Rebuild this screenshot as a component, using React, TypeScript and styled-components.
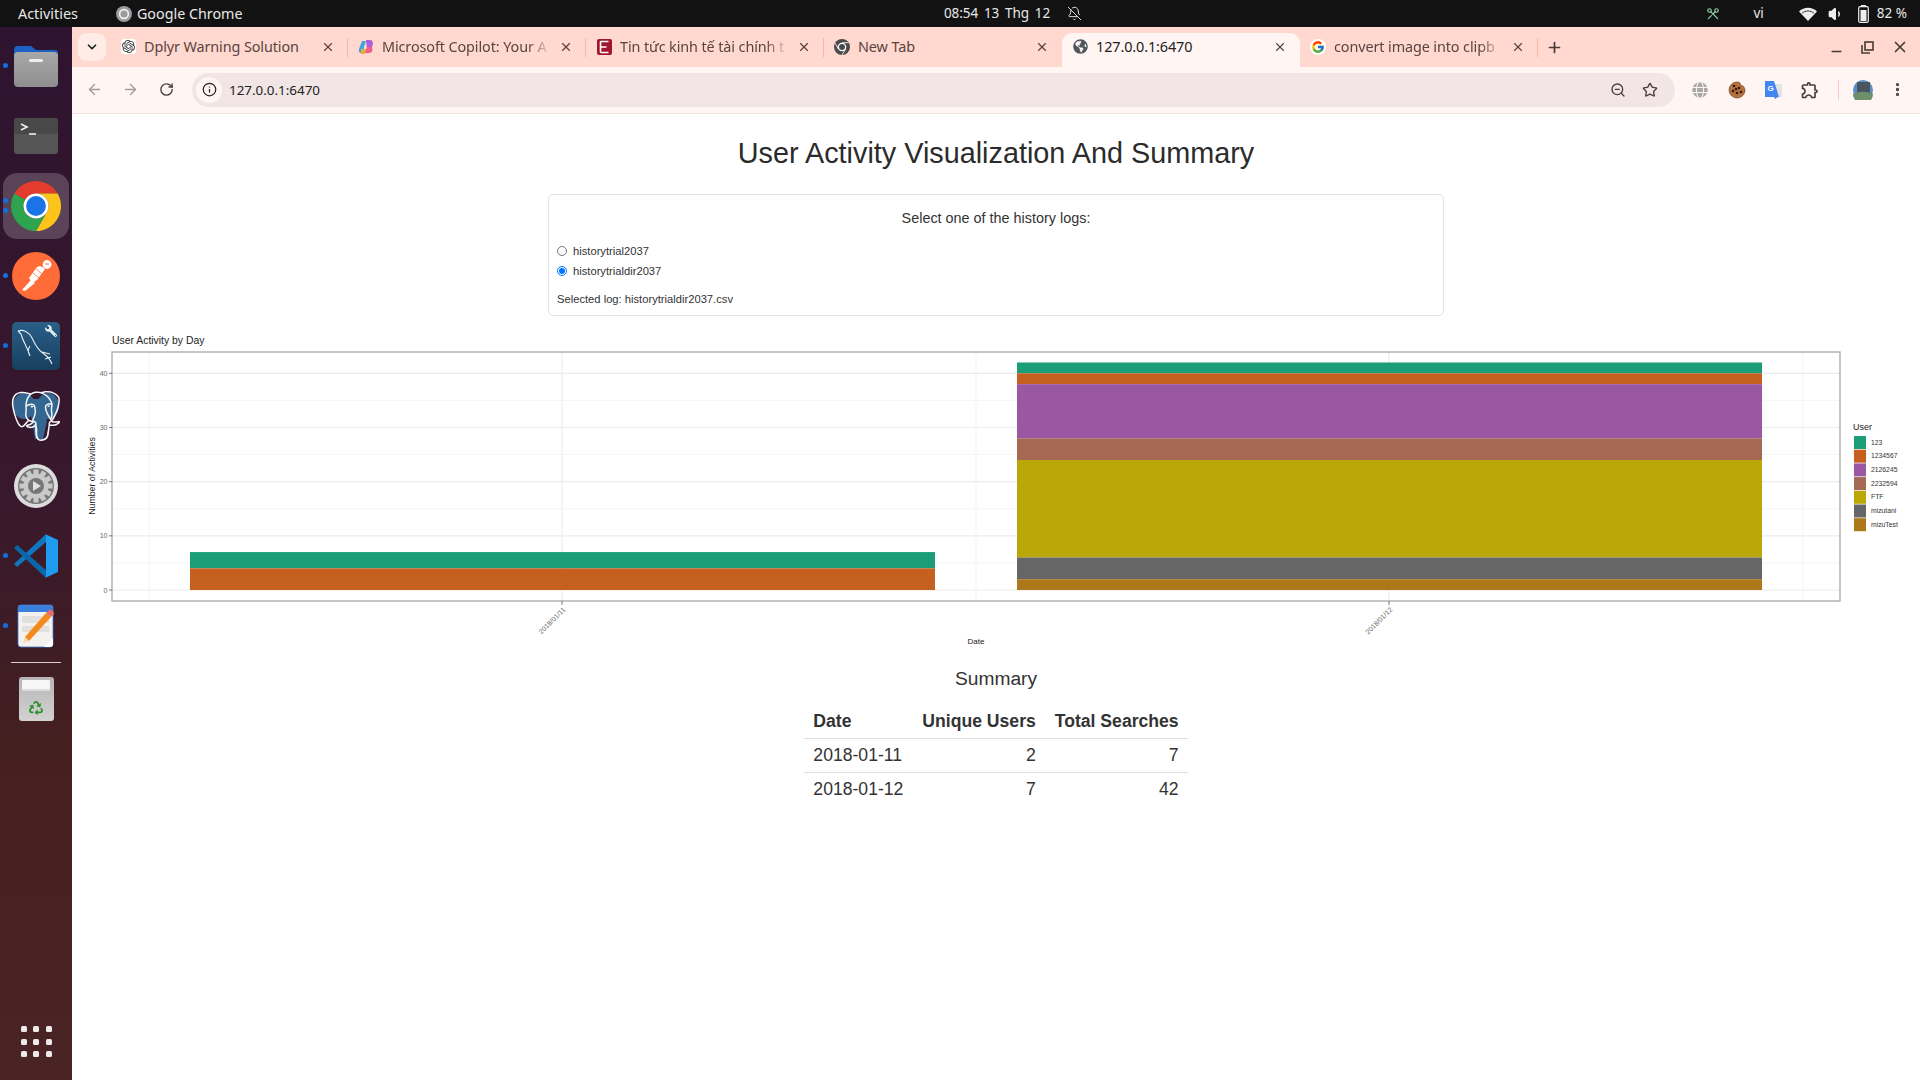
import React from 'react';
import styled, { createGlobalStyle } from 'styled-components';
import { ArrowLeft, ArrowRight, RotateCw, Info, ZoomOut, Star, BellOff, Plus, X, Minus, ChevronDown, EllipsisVertical, Volume1, Scissors } from 'lucide-react';
import { FcGoogle } from 'react-icons/fc';
import { SiOpenai, SiPostgresql } from 'react-icons/si';
import { FaGlobe, FaGlobeAmericas, FaRecycle, FaWrench } from 'react-icons/fa';
import { MdOutlineExtension } from 'react-icons/md';

const Global = createGlobalStyle`
  html, body { margin: 0; padding: 0; width: 1920px; height: 1080px; overflow: hidden; background: #fff; }
  * { box-sizing: border-box; }
`;

const Screen = styled.div`
  width: 1920px; height: 1080px; display: grid;
  grid-template-rows: 27px 1fr; grid-template-columns: 72px 1fr;
  font-family: "Liberation Sans", Arial, sans-serif; color: #333;
`;

/* ---------- GNOME top bar ---------- */
const TopBar = styled.header`
  grid-column: 1 / 3; background: #121212; color: #e8e8e8;
  display: grid; grid-template-columns: 944px 1fr auto; align-items: center;
  font-family: "Noto Sans", sans-serif; font-size: 14px; line-height: 27px;
`;
const TopLeft = styled.div`display: flex; align-items: center; padding-left: 18px;`;
const AppName = styled.span`display: flex; align-items: center; gap: 5px; margin-left: 38px; font-size: 14.3px;`;
const Activities = styled.span`font-size: 14.4px;`;
const TopCenter = styled.div`display: flex; align-items: center; gap: 17px; font-size: 13.5px;`;
const Clock = styled.span`word-spacing: 2.5px; letter-spacing: -0.1px;`;
const TopRight = styled.div`display: flex; align-items: center; padding-right: 13px;`;
const Tray = styled.span<{ $ml: number }>`display: flex; align-items: center; margin-left: ${p => p.$ml}px; font-size: 13.5px;`;
const TrayScissors = styled(Scissors)`transform: rotate(90deg);`;

/* ---------- Dock ---------- */
const Dock = styled.aside`
  background: linear-gradient(180deg, #2e1430 0%, #38182c 45%, #45201f 70%, #4a2424 100%);
  display: flex; flex-direction: column; align-items: center; padding-top: 4px;
`;
const Slot = styled.div`position: relative; width: 72px; height: 70px; flex: none; display: flex; align-items: center; justify-content: center;`;
const Highlight = styled.div`
  width: 66px; height: 66px; border-radius: 14px; background: rgba(255,255,255,.2);
  display: flex; align-items: center; justify-content: center;
`;
const Pip = styled.span<{ $off?: number }>`
  position: absolute; left: 3px; top: calc(50% - 3px + ${p => p.$off ?? 0}px); width: 5px; height: 5px; border-radius: 50%; background: #0f6fe0;
`;
const DockRule = styled.hr`width: 50px; height: 1px; flex: none; border: 0; background: #d8d0d4; margin: 1px 0 0;`;
const TrashSlot = styled(Slot)`height: 72px;`;
const AppGrid = styled.div`
  margin-top: auto; margin-bottom: 23px; display: grid; grid-template-columns: repeat(3, 6px); gap: 6.5px;
  & > i { width: 6px; height: 6px; border-radius: 1.5px; background: #efeaea; }
`;
const IconStack = styled.div<{ $s: number }>`position: relative; width: ${p => p.$s}px; height: ${p => p.$s}px;`;
const WorkbenchBase = styled.svg`display: block;`;
const WrenchBadge = styled(FaWrench)`position: absolute; right: 3px; top: 3px; transform: scaleX(-1);`;
const ElephantBody = styled.svg`position: absolute; inset: 0;`;
const ElephantLines = styled(SiPostgresql)`position: absolute; inset: 0;`;

/* ---------- Browser ---------- */
const Browser = styled.div`display: flex; flex-direction: column; min-width: 0; background: #fff;`;
const TabStrip = styled.div`height: 40px; background: #ffd8cf; display: flex; align-items: flex-end; padding-left: 6px;`;
const TabMenu = styled.div`
  width: 28px; height: 28px; margin: 0 4px 6px 0; border-radius: 9px; background: #ffece7;
  display: flex; align-items: center; justify-content: center; color: #222;
`;
const Tab = styled.div<{ $active?: boolean; $sep?: boolean }>`
  position: relative; width: 238px; height: 34px; flex: none;
  display: flex; align-items: center; padding: 0 13px 7px 10px; gap: 8px;
  font-family: "Noto Sans", sans-serif; font-size: 14.4px; letter-spacing: -0.1px;
  color: ${p => p.$active ? '#222' : '#5a4440'};
  background: ${p => p.$active ? '#fff5f2' : 'transparent'};
  border-radius: ${p => p.$active ? '10px 10px 0 0' : '0'};
  ${p => p.$sep ? `&::after { content: ''; position: absolute; right: 0; top: 5px; height: 19px; width: 1.5px; background: #f9b5a4; }` : ''}
`;
const TabIcon = styled.span`width: 16px; height: 16px; flex: none; display: flex; align-items: center; justify-content: center;`;
const OpenAiFavicon = styled(SiOpenai)`width: 15px; height: 15px; padding: 1px; border-radius: 3px; background: #fff; color: #333;`;
const GoogleChip = styled.span`display: flex; padding: 1px; border-radius: 50%; background: #fff;`;
const TabTitle = styled.span<{ $fade?: boolean }>`
  flex: 1; white-space: nowrap; min-width: 0;
  ${p => p.$fade ? `mask-image: linear-gradient(90deg, #000 86%, transparent 100%);` : ''}
`;
const TabClose = styled.span`display: flex; color: #5a4440; flex: none;`;
const NewTab = styled.div`width: 32px; height: 28px; margin-bottom: 6px; display: flex; align-items: center; justify-content: center; color: #4a3a36;`;
const WindowButtons = styled.div`margin-left: auto; margin-bottom: 6px; height: 28px; display: flex; align-items: center; gap: 16px; padding-right: 11px; color: #4a3a36;`;
const MinimizeIcon = styled(Minus)`transform: translateY(4px);`;
const Toolbar = styled.div`
  height: 47px; background: #fff5f2; border-bottom: 1px solid #f3dfdb;
  display: flex; align-items: center; padding: 0 0 1px 0;
`;
const NavGroup = styled.div`width: 120px; padding-left: 13px; display: flex; gap: 18px; align-items: center;`;
const NavBtn = styled.span<{ $dim?: boolean }>`display: flex; width: 18px; justify-content: center; color: ${p => p.$dim ? '#a89a97' : '#4a3e3b'};`;
const Omnibox = styled.div`
  width: 1483px; height: 34px; border-radius: 17px; background: #f1e6e5; display: flex; align-items: center; padding: 0 17px 0 4px;
`;
const InfoChip = styled.span`width: 26px; height: 26px; border-radius: 50%; background: #fff5f2; display: flex; align-items: center; justify-content: center; color: #222;`;
const UrlText = styled.span`margin-left: 7px; font-family: "Noto Sans", sans-serif; font-size: 13.4px; color: #222; flex: 1;`;
const OmniActions = styled.div`display: flex; gap: 16px; color: #4a3e3b; align-items: center;`;
const ExtGroup = styled.div`display: flex; align-items: center; margin-left: 6.5px;`;
const Ext = styled.span<{ $w?: number }>`width: ${p => p.$w ?? 36}px; display: flex; justify-content: center; align-items: center; color: #4a3e3b;`;
const ExtRule = styled.span`width: 1px; height: 20px; background: #f5cfc6; margin: 0 9px 0 9px;`;

/* ---------- Page (Shiny app) ---------- */
const Page = styled.main`flex: 1; display: flex; flex-direction: column; align-items: center; min-height: 0;`;
const Title = styled.h1`margin: 23px 0 25px; font-size: 28.8px; line-height: 32px; font-weight: 400; color: #2b2b2b;`;
const Card = styled.section`
  width: 896px; height: 122px; border: 1px solid #e3e3e3; border-radius: 5px; padding: 0 8px;
  display: flex; flex-direction: column; font-size: 11.2px;
`;
const CardHeading = styled.h4`margin: 14px 0 14px; text-align: center; font-size: 14.4px; line-height: 18px; font-weight: 400; color: #333;`;
const RadioRow = styled.label`display: flex; align-items: center; height: 20px; gap: 6px;`;
const Radio = styled.input`width: 10px; height: 10px; margin: 0 0 0 0; flex: none;`;
const Selected = styled.p`margin: 11px 0 0; line-height: 14px;`;
const PlotFrame = styled.div`margin-top: 14px; width: 100%; height: 320px; flex: none;`;
const PlotSvg = styled.svg`display: block; width: 100%; height: 100%; font-family: "Liberation Sans", Arial, sans-serif;`;
const SummaryTitle = styled.h3`margin: 17px 0 13px; font-size: 19.2px; line-height: 24px; font-weight: 400; color: #333;`;
const Table = styled.table`width: 384px; border-collapse: collapse; font-size: 17.6px; color: #333;`;
const Th = styled.th<{ $num?: boolean }>`
  padding: 2px 9.5px 0; height: 34px; font-weight: 700; text-align: ${p => p.$num ? 'right' : 'left'}; white-space: nowrap;
  border-bottom: 1px solid #ddd;
`;
const Td = styled.td<{ $num?: boolean; $last?: boolean }>`
  padding: 0 9.5px; height: 34px; white-space: nowrap; text-align: ${p => p.$num ? 'right' : 'left'};
  ${p => p.$last ? '' : 'border-bottom: 1px solid #ddd;'}
`;

/* ---------- Icons ---------- */
const ChromeLogo = ({ s }: { s: number }) => (
  <svg width={s} height={s} viewBox="0 0 48 48">
    <path d="M3.2 12A24 24 0 0 1 44.78 12H24A12 12 0 0 0 13.6 18Z" fill="#e33b2e" />
    <path d="M44.78 12A24 24 0 0 1 24 48L34.4 30A12 12 0 0 0 24 12Z" fill="#fcc419" />
    <path d="M24 48A24 24 0 0 1 3.2 12L13.6 18A12 12 0 0 0 34.4 30Z" fill="#2ea44f" />
    <circle cx="24" cy="24" r="12" fill="#fff" />
    <circle cx="24" cy="24" r="9.5" fill="#1a73e8" />
  </svg>
);
const MonoChrome = ({ s, c, ring }: { s: number; c: string; ring: string }) => (
  <svg width={s} height={s} viewBox="0 0 48 48">
    <circle cx="24" cy="24" r="24" fill={c} />
    <circle cx="24" cy="24" r="13" fill={ring} />
    <circle cx="24" cy="24" r="9" fill={c} />
    <path d="M24 11h20M13 30L3 12M35 30L24 48" stroke={ring} strokeWidth="2.5" />
  </svg>
);
const AppIndicator = () => (
  <svg width="16" height="16" viewBox="0 0 16 16">
    <circle cx="8" cy="8" r="8" fill="#9c9c9c" />
    <circle cx="8" cy="8" r="4.4" fill="none" stroke="#f0f0f0" strokeWidth="1.6" />
  </svg>
);
const FolderIcon = () => (
  <svg width="46" height="44" viewBox="0 0 46 44">
    <defs><linearGradient id="fg" x1="0" y1="0" x2="0" y2="1"><stop offset="0" stopColor="#a8a8a8" /><stop offset="1" stopColor="#8e8e8e" /></linearGradient></defs>
    <path d="M1 6a4 4 0 0 1 4-4h13l5 4h19a3 3 0 0 1 3 3v8H1Z" fill="#1b62c4" />
    <rect x="1" y="8" width="44" height="35" rx="4" fill="url(#fg)" />
    <rect x="16" y="15" width="14" height="3" rx="1.5" fill="#eee" />
  </svg>
);
const TerminalIcon = () => (
  <svg width="44" height="36" viewBox="0 0 44 36">
    <rect x="0" y="0" width="44" height="36" rx="3" fill="#565656" />
    <rect x="0" y="0" width="44" height="16" rx="3" fill="#484848" />
    <path d="M7 6l6 3-6 3" fill="none" stroke="#eee" strokeWidth="1.6" />
    <path d="M15 16h7" stroke="#eee" strokeWidth="1.6" />
  </svg>
);
const PostmanIcon = () => (
  <svg width="48" height="48" viewBox="0 0 48 48">
    <circle cx="24" cy="24" r="24" fill="#ff6c37" />
    <path d="M10 38l9-10 4 3-10 8Z" fill="#fff" />
    <path d="M17 26l8-11c3-2 6 0 8 2l-8 11-5 3Z" fill="#fff" />
    <circle cx="35" cy="12.5" r="4.4" fill="#fff" />
    <path d="M21 21l6 5M24 17l6 5" stroke="#ff6c37" strokeWidth=".8" />
    <path d="M33 12l4 0" stroke="#ff6c37" strokeWidth="1" />
  </svg>
);
const WorkbenchIcon = () => (
  <IconStack $s={48}>
    <WorkbenchBase width="48" height="48" viewBox="0 0 48 48">
      <defs><linearGradient id="wb" x1="0" y1="0" x2="0" y2="1"><stop offset="0" stopColor="#2a5f88" /><stop offset="1" stopColor="#173f5f" /></linearGradient></defs>
      <rect width="48" height="48" rx="5" fill="url(#wb)" />
      <path d="M6 9c5-2 11 1 14 7 3 6 5 12 12 16 3 2 6 5 8 10M6 9l3 3c2 8 6 12 9 22M18 24c-2 3-2 6-1 8M30 30l8 2M33 37l6-2" fill="none" stroke="#e6eef5" strokeWidth="1.1" />
    </WorkbenchBase>
    <WrenchBadge size={12} color="#e6eef5" />
  </IconStack>
);
const PostgresIcon = () => (
  <IconStack $s={50}>
    <ElephantBody width="50" height="50" viewBox="0 0 50 50">
      <ellipse cx="13" cy="15" rx="11" ry="13" fill="#336791" />
      <ellipse cx="37" cy="15" rx="11" ry="13" fill="#336791" />
      <path d="M17 8h16l3 22-4 18h-8l-3-18Z" fill="#336791" />
    </ElephantBody>
    <ElephantLines size={50} color="#f4f6f8" />
  </IconStack>
);
const SettingsIcon = () => {
  const teeth = Array.from({ length: 12 }, (_, i) => i * 30);
  return (
    <svg width="44" height="44" viewBox="0 0 44 44">
      <circle cx="22" cy="22" r="22" fill="#dcdcdc" />
      <circle cx="22" cy="22" r="18" fill="#777" />
      {teeth.map(a => <rect key={a} x="19.5" y="5.5" width="5" height="6" fill="#c9c9c9" transform={`rotate(${a} 22 22)`} />)}
      <circle cx="22" cy="22" r="12.5" fill="#c9c9c9" />
      <circle cx="22" cy="22" r="8" fill="#777" />
      <path d="M19 17l8 5-8 5Z" fill="#e2e2e2" />
    </svg>
  );
};
const VSCodeIcon = () => (
  <svg width="44" height="44" viewBox="0 0 44 44">
    <path d="M0 30l3 3 29-25V0Z" fill="#0f77c0" />
    <path d="M0 14l3-3 29 25v8Z" fill="#0b66a8" />
    <path d="M31 0l13 6v32l-13 6 1-1V1Z" fill="#1f9cf0" />
  </svg>
);
const EditorIcon = () => (
  <svg width="38" height="44" viewBox="0 0 38 44">
    <rect x="1" y="1" width="35" height="42" rx="3" fill="#f4f2ee" stroke="#3f7ad0" strokeWidth="0.8" />
    <path d="M1 4a3 3 0 0 1 3-3h29a3 3 0 0 1 3 3v4H1Z" fill="#3b7fdc" />
    <rect x="5" y="12" width="27" height="7" fill="#e1e0dc" />
    <rect x="5" y="22" width="27" height="6" fill="#e1e0dc" />
    <path d="M8 33l4 4 22-24-5-4Z" fill="#f28a1e" />
    <path d="M8 33l-2 6 6-2Z" fill="#f0d8b0" />
    <path d="M29 9l5 4 3-3c0-3-3-5-5-4Z" fill="#e56a6a" />
    <path d="M27 43l9-9v6a3 3 0 0 1-3 3Z" fill="#fff" />
  </svg>
);
const TrashBody = styled.div`
  position: relative; width: 35px; height: 44px; border-radius: 3px; background: linear-gradient(180deg, #b5b5b5, #d2d2d2);
  display: flex; justify-content: center; padding-top: 3px;
`;
const TrashLid = styled.span`width: 28px; height: 11px; border-radius: 1px; background: #f6f6f6; border-bottom: 2px solid #ddd;`;
const TrashMark = styled.span`position: absolute; left: 10.5px; top: 24px; display: flex;`;
const TrashIcon = () => (
  <TrashBody>
    <TrashLid />
    <TrashMark><FaRecycle size={14} color="#2f8f2f" /></TrashMark>
  </TrashBody>
);
const CopilotIcon = () => (
  <svg width="16" height="16" viewBox="0 0 16 16">
    <path d="M4 2h4L6 8l-1 6H3C1 14 .5 12 1 10Z" fill="#3fa8d8" />
    <path d="M8 1h4c2 0 3 2 3 4l-2 5H9Z" fill="#b25bd6" />
    <path d="M3 10h6l-2 5H3Z" fill="#f2a93b" />
    <path d="M9 8h5c1 3 0 6-3 6H7Z" fill="#ee5f8c" />
  </svg>
);
const ERedIcon = () => (
  <svg width="15" height="16" viewBox="0 0 15 16">
    <rect width="15" height="16" rx="2" fill="#a3142f" />
    <path d="M3.5 2.5h8M3.5 13.5h8M3.5 2.5v11M3.5 8h6" stroke="#fff" strokeWidth="1.6" fill="none" />
  </svg>
);
const CookieIcon = () => (
  <svg width="18" height="18" viewBox="0 0 18 18">
    <path d="M9 1c1 0 2 0 3 1 0 2 2 3 3 3 2 2 2 4 2 5a8 8 0 1 1-8-9Z" fill="#b5713e" stroke="#5a3418" strokeWidth=".6" />
    {[[6, 5], [11, 7], [5, 10], [9, 12], [13, 11], [8, 8]].map(([x, y]) => <circle key={x * y} cx={x} cy={y} r="1.3" fill="#2c1a0e" />)}
  </svg>
);
const TranslateIcon = () => (
  <svg width="18" height="20" viewBox="0 0 18 20">
    <path d="M8 4h10v13H10Z" fill="#e3e3e3" />
    <path d="M1 1h9l5 16H1Z" fill="#4285f4" />
    <text x="3.5" y="11" fontSize="8" fontWeight="700" fill="#fff" fontFamily="Liberation Sans">G</text>
    <path d="M11 19l-1-2h4Z" fill="#4285f4" />
  </svg>
);
const Avatar = () => (
  <svg width="20" height="20" viewBox="0 0 20 20">
    <circle cx="10" cy="10" r="10" fill="#5b8fc9" />
    <rect x="4" y="2" width="13" height="13" fill="#4a5560" />
    <path d="M0 14c5-3 15-3 20 0a10 10 0 0 1-20 0Z" fill="#6f8f6a" />
  </svg>
);
const WifiGlyph = () => (
  <svg width="18" height="14" viewBox="0 0 18 14"><path d="M0 4.5C5-.5 13-.5 18 4.5L9 14Z" fill="#eee" /><path d="M3 6.2c4-3 8-3 12 0" stroke="#121212" strokeWidth=".8" fill="none" /></svg>
);
const BatteryGlyph = () => (
  <svg width="11" height="18" viewBox="0 0 11 18"><rect x="3" y="0" width="5" height="2" fill="#eee" /><rect x=".7" y="1.7" width="9.6" height="15.6" rx="1.6" fill="none" stroke="#eee" strokeWidth="1.2" /><rect x="2.5" y="5" width="6" height="11" fill="#eee" /></svg>
);

/* ---------- Plot data ---------- */
const X0 = 112, X1 = 1840, Y0 = 352, Y1 = 601;
const yOf = (v: number) => 590 - v * 5.417;
const series = [
  { name: '123', c: '#1b9e77' }, { name: '1234567', c: '#c66021' }, { name: '2126245', c: '#9a58a2' },
  { name: '2232594', c: '#a56853' }, { name: 'FTF', c: '#baa708' }, { name: 'mizutani', c: '#666666' }, { name: 'mizuTest', c: '#ac7819' },
];
const rightBar = [[42, 40], [40, 38], [38, 28], [28, 24], [24, 6], [6, 2], [2, 0]];
const leftBar = [[7, 4], [4, 0]];

const Plot = () => (
  <PlotSvg viewBox="72 330 1848 320">
    <text x="112" y="344" fontSize="10.4" fill="#222">User Activity by Day</text>
    {[5, 15, 25, 35].map(v => <line key={v} x1={X0} x2={X1} y1={yOf(v)} y2={yOf(v)} stroke="#f5f5f5" />)}
    {[149, 976, 1803].map(x => <line key={x} x1={x} x2={x} y1={Y0} y2={Y1} stroke="#f5f5f5" />)}
    {[0, 10, 20, 30, 40].map(v => <line key={v} x1={X0} x2={X1} y1={yOf(v)} y2={yOf(v)} stroke="#ececec" strokeWidth="1.2" />)}
    {[562, 1389].map(x => <line key={x} x1={x} x2={x} y1={Y0} y2={Y1} stroke="#ececec" strokeWidth="1.2" />)}
    {leftBar.map(([a, b], i) => <rect key={i} x="190" width="745" y={yOf(a)} height={yOf(b) - yOf(a)} fill={series[i].c} />)}
    {rightBar.map(([a, b], i) => <rect key={i} x="1017" width="745" y={yOf(a)} height={yOf(b) - yOf(a)} fill={series[i].c} />)}
    <rect x={X0} y={Y0} width={X1 - X0} height={Y1 - Y0} fill="none" stroke="#a8a8a8" strokeWidth="1.3" />
    {[0, 10, 20, 30, 40].map(v => (
      <g key={v}>
        <line x1="109" x2={X0} y1={yOf(v)} y2={yOf(v)} stroke="#444" strokeWidth=".7" />
        <text x="107.5" y={yOf(v) + 2.5} fontSize="7" textAnchor="end" fill="#666">{v}</text>
      </g>
    ))}
    <text transform="translate(94.5 476) rotate(-90)" fontSize="8.8" textAnchor="middle" fill="#222">Number of Activities</text>
    {[[562, '2018/01/11'], [1389, '2018/01/12']].map(([x, t]) => (
      <g key={t as string}>
        <line x1={x as number} x2={x as number} y1={Y1} y2="605" stroke="#444" strokeWidth=".7" />
        <text transform={`translate(${(x as number) + 4} 610) rotate(-45)`} fontSize="7" textAnchor="end" fill="#666">{t}</text>
      </g>
    ))}
    <text x="976" y="644" fontSize="8" textAnchor="middle" fill="#222">Date</text>
    <text x="1853" y="430" fontSize="9" fill="#222">User</text>
    {series.map((s, i) => (
      <g key={s.name}>
        <rect x="1854" y={436 + i * 13.7} width="12" height="13" fill={s.c} />
        <text x="1871" y={444.5 + i * 13.7} fontSize="6.8" fill="#333">{s.name}</text>
      </g>
    ))}
  </PlotSvg>
);

const tabs = [
  { icon: <OpenAiFavicon />, title: 'Dplyr Warning Solution' },
  { icon: <CopilotIcon />, title: 'Microsoft Copilot: Your A', fade: true },
  { icon: <ERedIcon />, title: 'Tin tức kinh tế tài chính t', fade: true },
  { icon: <MonoChrome s={16} c="#4a4a4a" ring="#fff" />, title: 'New Tab', nosep: true },
  { icon: <FaGlobeAmericas size={15} color="#50565c" />, title: '127.0.0.1:6470', active: true, nosep: true },
  { icon: <GoogleChip><FcGoogle size={14} /></GoogleChip>, title: 'convert image into clipb', fade: true },
];

export default function App() {
  return (
    <>
      <Global />
      <Screen>
        <TopBar>
          <TopLeft>
            <Activities>Activities</Activities>
            <AppName><AppIndicator />Google Chrome</AppName>
          </TopLeft>
          <TopCenter>
            <Clock>08:54 13 Thg 12</Clock>
            <BellOff size={15} color="#e8e8e8" strokeWidth={1.5} />
          </TopCenter>
          <TopRight>
            <TrayScissors size={14} color="#8fd0a8" />
            <Tray $ml={33}>vi</Tray>
            <Tray $ml={35}><WifiGlyph /></Tray>
            <Tray $ml={11}><Volume1 size={16} color="#eee" fill="#eee" /></Tray>
            <Tray $ml={14}><BatteryGlyph /></Tray>
            <Tray $ml={8}>82 %</Tray>
          </TopRight>
        </TopBar>

        <Dock>
          <Slot><Pip /><FolderIcon /></Slot>
          <Slot><TerminalIcon /></Slot>
          <Slot><Pip $off={-5} /><Pip $off={5} /><Highlight><ChromeLogo s={50} /></Highlight></Slot>
          <Slot><Pip /><PostmanIcon /></Slot>
          <Slot><Pip /><WorkbenchIcon /></Slot>
          <Slot><PostgresIcon /></Slot>
          <Slot><SettingsIcon /></Slot>
          <Slot><Pip /><VSCodeIcon /></Slot>
          <Slot><Pip /><EditorIcon /></Slot>
          <DockRule />
          <TrashSlot><TrashIcon /></TrashSlot>
          <AppGrid>{Array.from({ length: 9 }, (_, i) => <i key={i} />)}</AppGrid>
        </Dock>

        <Browser>
          <TabStrip>
            <TabMenu><ChevronDown size={14} strokeWidth={3} /></TabMenu>
            {tabs.map(t => (
              <Tab key={t.title} $active={t.active} $sep={!t.nosep}>
                <TabIcon>{t.icon}</TabIcon>
                <TabTitle $fade={t.fade}>{t.title}</TabTitle>
                <TabClose><X size={14} strokeWidth={2} /></TabClose>
              </Tab>
            ))}
            <NewTab><Plus size={17} strokeWidth={2.4} /></NewTab>
            <WindowButtons>
              <MinimizeIcon size={15} strokeWidth={2.2} />
              <svg width="15" height="15" viewBox="0 0 15 15" fill="none" stroke="currentColor" strokeWidth="1.6"><rect x="5" y="2" width="8" height="8" /><path d="M2 5v8h8" /></svg>
              <X size={18} strokeWidth={2.2} />
            </WindowButtons>
          </TabStrip>
          <Toolbar>
            <NavGroup>
              <NavBtn $dim><ArrowLeft size={17} /></NavBtn>
              <NavBtn $dim><ArrowRight size={17} /></NavBtn>
              <NavBtn><RotateCw size={15} strokeWidth={2.2} /></NavBtn>
            </NavGroup>
            <Omnibox>
              <InfoChip><Info size={15} /></InfoChip>
              <UrlText>127.0.0.1:6470</UrlText>
              <OmniActions>
                <ZoomOut size={16} />
                <Star size={16} strokeWidth={2} />
              </OmniActions>
            </Omnibox>
            <ExtGroup>
              <Ext $w={37}><FaGlobe size={16} color="#a9a9a9" /></Ext>
              <Ext><CookieIcon /></Ext>
              <Ext><TranslateIcon /></Ext>
              <Ext $w={38}><MdOutlineExtension size={20} /></Ext>
              <ExtRule />
              <Ext $w={30}><Avatar /></Ext>
              <Ext $w={40}><EllipsisVertical size={17} strokeWidth={2.6} /></Ext>
            </ExtGroup>
          </Toolbar>
          <Page>
            <Title>User Activity Visualization And Summary</Title>
            <Card>
              <CardHeading>Select one of the history logs:</CardHeading>
              <RadioRow><Radio type="radio" name="log" readOnly />historytrial2037</RadioRow>
              <RadioRow><Radio type="radio" name="log" checked readOnly />historytrialdir2037</RadioRow>
              <Selected>Selected log: historytrialdir2037.csv</Selected>
            </Card>
            <PlotFrame><Plot /></PlotFrame>
            <SummaryTitle>Summary</SummaryTitle>
            <Table>
              <thead>
                <tr><Th>Date</Th><Th $num>Unique Users</Th><Th $num>Total Searches</Th></tr>
              </thead>
              <tbody>
                <tr><Td>2018-01-11</Td><Td $num>2</Td><Td $num>7</Td></tr>
                <tr><Td $last>2018-01-12</Td><Td $num $last>7</Td><Td $num $last>42</Td></tr>
              </tbody>
            </Table>
          </Page>
        </Browser>
      </Screen>
    </>
  );
}
